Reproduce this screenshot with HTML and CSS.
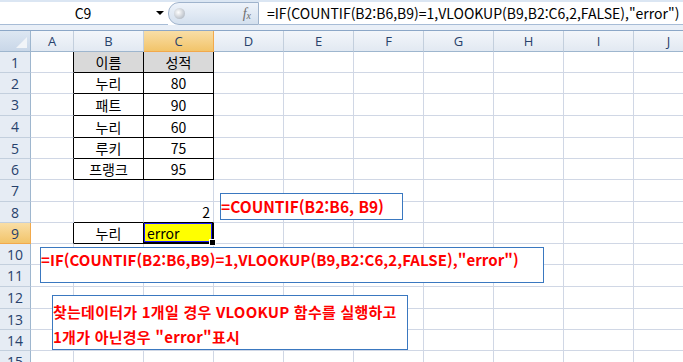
FILE: index.html
```html
<!DOCTYPE html>
<html lang="ko">
<head>
    <meta charset="UTF-8">
    <meta name="viewport" content="width=device-width, initial-scale=1.0">
    <title>COUNTIF VLOOKUP</title>
    <link rel="stylesheet" href="styles.css">
</head>
<body>
    <div class="app">
        <div class="formula-bar">
            <div class="name-box">
                <span class="name-box__text">C9</span>
                <span class="name-box__arrow"></span>
            </div>
            <div class="fx-pill">
                <span class="fx-pill__knob"></span>
                <span class="fx-pill__label">f<sub>x</sub></span>
            </div>
            <div class="formula-input">=IF(COUNTIF(B2:B6,B9)=1,VLOOKUP(B9,B2:C6,2,FALSE),"error")</div>
        </div>

        <div class="sheet">
            <!-- header -->
            <div class="hd corner"></div>
            <div class="hd col">A</div>
            <div class="hd col">B</div>
            <div class="hd col is-active">C</div>
            <div class="hd col">D</div>
            <div class="hd col">E</div>
            <div class="hd col">F</div>
            <div class="hd col">G</div>
            <div class="hd col">H</div>
            <div class="hd col">I</div>
            <div class="hd col">J</div>

            <!-- 1 -->
            <div class="hd row">1</div>
            <div class="c edge"></div>
            <div class="c box head">이름</div>
            <div class="c box head">성적</div>
            <div class="c"></div><div class="c"></div><div class="c"></div><div class="c"></div><div class="c"></div><div class="c"></div><div class="c"></div>

            <!-- 2 -->
            <div class="hd row">2</div>
            <div class="c edge"></div>
            <div class="c box">누리</div>
            <div class="c box">80</div>
            <div class="c"></div><div class="c"></div><div class="c"></div><div class="c"></div><div class="c"></div><div class="c"></div><div class="c"></div>

            <!-- 3 -->
            <div class="hd row">3</div>
            <div class="c edge"></div>
            <div class="c box">패트</div>
            <div class="c box">90</div>
            <div class="c"></div><div class="c"></div><div class="c"></div><div class="c"></div><div class="c"></div><div class="c"></div><div class="c"></div>

            <!-- 4 -->
            <div class="hd row">4</div>
            <div class="c edge"></div>
            <div class="c box">누리</div>
            <div class="c box">60</div>
            <div class="c"></div><div class="c"></div><div class="c"></div><div class="c"></div><div class="c"></div><div class="c"></div><div class="c"></div>

            <!-- 5 -->
            <div class="hd row">5</div>
            <div class="c edge"></div>
            <div class="c box">루키</div>
            <div class="c box">75</div>
            <div class="c"></div><div class="c"></div><div class="c"></div><div class="c"></div><div class="c"></div><div class="c"></div><div class="c"></div>

            <!-- 6 -->
            <div class="hd row">6</div>
            <div class="c edge"></div>
            <div class="c box">프랭크</div>
            <div class="c box">95</div>
            <div class="c"></div><div class="c"></div><div class="c"></div><div class="c"></div><div class="c"></div><div class="c"></div><div class="c"></div>

            <!-- 7 -->
            <div class="hd row">7</div>
            <div class="c"></div><div class="c"></div><div class="c"></div><div class="c"></div><div class="c"></div><div class="c"></div><div class="c"></div><div class="c"></div><div class="c"></div><div class="c"></div>

            <!-- 8 -->
            <div class="hd row">8</div>
            <div class="c"></div>
            <div class="c above"></div>
            <div class="c num above">2</div>
            <div class="c"></div><div class="c"></div><div class="c"></div><div class="c"></div><div class="c"></div><div class="c"></div><div class="c"></div>

            <!-- 9 -->
            <div class="hd row is-active">9</div>
            <div class="c edge"></div>
            <div class="c box">누리</div>
            <div class="c selected">error</div>
            <div class="c"></div><div class="c"></div><div class="c"></div><div class="c"></div><div class="c"></div><div class="c"></div><div class="c"></div>

            <!-- 10 - 15 -->
            <div class="hd row">10</div>
            <div class="c"></div><div class="c"></div><div class="c"></div><div class="c"></div><div class="c"></div><div class="c"></div><div class="c"></div><div class="c"></div><div class="c"></div><div class="c"></div>
            <div class="hd row">11</div>
            <div class="c"></div><div class="c"></div><div class="c"></div><div class="c"></div><div class="c"></div><div class="c"></div><div class="c"></div><div class="c"></div><div class="c"></div><div class="c"></div>
            <div class="hd row">12</div>
            <div class="c"></div><div class="c"></div><div class="c"></div><div class="c"></div><div class="c"></div><div class="c"></div><div class="c"></div><div class="c"></div><div class="c"></div><div class="c"></div>
            <div class="hd row">13</div>
            <div class="c"></div><div class="c"></div><div class="c"></div><div class="c"></div><div class="c"></div><div class="c"></div><div class="c"></div><div class="c"></div><div class="c"></div><div class="c"></div>
            <div class="hd row">14</div>
            <div class="c"></div><div class="c"></div><div class="c"></div><div class="c"></div><div class="c"></div><div class="c"></div><div class="c"></div><div class="c"></div><div class="c"></div><div class="c"></div>
            <div class="hd row">15</div>
            <div class="c"></div><div class="c"></div><div class="c"></div><div class="c"></div><div class="c"></div><div class="c"></div><div class="c"></div><div class="c"></div><div class="c"></div><div class="c"></div>
        </div>

        <!-- floating text boxes -->
        <div class="shape shape--countif">=COUNTIF(B2:B6, B9)</div>
        <div class="shape shape--if">=IF(COUNTIF(B2:B6,B9)=1,VLOOKUP(B9,B2:C6,2,FALSE),"error")</div>
        <div class="shape shape--note">
            <p>찾는데이터가 1개일 경우 VLOOKUP 함수를 실행하고</p>
            <p>1개가 아닌경우 "error"표시</p>
        </div>
    </div>
</body>
</html>
```

FILE: styles.css
```css
* { box-sizing: border-box; }

body {
  margin: 0;
  background: #fff;
  font-family: "Noto Sans CJK KR", "Noto Sans", sans-serif;
  color: #000;
}

.app {
  position: relative;
  width: 683px;
  height: 362px;
  overflow: hidden;
}

/* ==================== formula bar ==================== */

.formula-bar {
  display: flex;
  align-items: stretch;
  height: 30px;
  border-top: 2px solid #dbe6f3;
  border-bottom: 5px solid #e9eff7;
  background: #fff;
}

.name-box {
  display: flex;
  align-items: center;
  width: 168px;
  border-bottom: 1px solid #a7bcd6;
}

.name-box__text {
  flex: 1;
  text-align: center;
  font-size: 14px;
  padding-left: 10px;
}

.name-box__arrow {
  width: 0;
  height: 0;
  margin-right: 4px;
  border-left: 4px solid transparent;
  border-right: 4px solid transparent;
  border-top: 4px solid #000;
}

.fx-pill {
  position: relative;
  display: flex;
  align-items: center;
  justify-content: flex-end;
  width: 91px;
  padding-right: 7px;
  border: 1px solid #9fb3cc;
  border-radius: 11px 0 0 11px;
  background: linear-gradient(#eef3fa, #d4e0ee);
}

.fx-pill__knob {
  position: absolute;
  left: 5px;
  top: 5px;
  width: 11px;
  height: 11px;
  border-radius: 50%;
  background: radial-gradient(circle at 40% 40%, #fff, #9fa8b4);
}

.fx-pill__label {
  font-family: "Liberation Serif", serif;
  font-style: italic;
  font-size: 14px;
  color: #6d6d6d;
}

.fx-pill__label sub {
  font-size: 10px;
  vertical-align: -1px;
}

.formula-input {
  flex: 1;
  padding-left: 8px;
  line-height: 22px;
  font-size: 14px;
  white-space: nowrap;
  border-bottom: 1px solid #a7bcd6;
}

/* ==================== grid ==================== */

.sheet {
  display: grid;
  grid-template-columns: 31px 43px repeat(9, 70px);
  grid-template-rows: 21px 21px 21px 22px 22px 21px 21px 22px 21px 21px 21px 22px 22px 21px 21px 22px;
  border-top: 1px solid #8ca7c7;
}

.c {
  border-right: 1px solid #d0d7e5;
  border-bottom: 1px solid #d0d7e5;
  display: flex;
  align-items: center;
  justify-content: center;
  font-size: 14px;
  white-space: nowrap;
}

.hd {
  display: flex;
  align-items: center;
  justify-content: center;
  border-right: 1px solid #c3cfdd;
  border-bottom: 1px solid #c3cfdd;
  background: linear-gradient(#f3f6fa, #e2e9f2);
  color: #27416b;
  font-family: "Open Sans", sans-serif;
  font-size: 13px;
}

.hd.row {
  background: #e6ecf4;
  border-right-color: #9eb6ce;
  font-size: 14px;
}

.hd.col {
  border-bottom-color: #9eb6ce;
}

.hd.is-active {
  background: linear-gradient(#f9dea6, #f2c46a);
  border-color: #f2a94b;
}

.corner {
  position: relative;
  background: linear-gradient(#dde7f2, #c9d7e8);
  border-right-color: #9eb6ce;
  border-bottom-color: #9eb6ce;
}

.corner::after {
  content: "";
  position: absolute;
  right: 3px;
  bottom: 3px;
  border-left: 11px solid transparent;
  border-bottom: 11px solid #f1f4f8;
}

/* data table */
.c.edge { border-right-color: #000; }
.c.above { border-bottom-color: #000; }
.c.box {
  border-right-color: #000;
  border-bottom-color: #000;
}
.c.head { background: #d9d9d9; }

.c.num {
  justify-content: flex-end;
  padding-right: 3px;
}

.c.selected {
  position: relative;
  justify-content: flex-start;
  padding-left: 3px;
  background: #ff0;
  border-right: 2px solid #000;
  border-bottom: 2px solid #000;
  box-shadow: inset 0 0 0 1px #1c1cff;
}

.c.selected::after {
  content: "";
  position: absolute;
  right: -4px;
  bottom: -4px;
  width: 5px;
  height: 5px;
  background: #000;
  border: 1px solid #fff;
}

/* ==================== text boxes ==================== */

.shape {
  position: absolute;
  border: 1px solid #3a78c0;
  background: #fff;
  color: #ff0000;
  font-weight: bold;
  white-space: nowrap;
}

.shape--countif {
  left: 220px;
  top: 193px;
  width: 183px;
  height: 27px;
  padding-top: 1px;
  font-size: 15.5px;
  line-height: 22px;
}

.shape--if {
  left: 40px;
  top: 247px;
  width: 504px;
  height: 36px;
  padding-top: 1px;
  font-size: 15px;
  letter-spacing: 0.07px;
  line-height: 22px;
}

.shape--note {
  left: 52px;
  top: 295px;
  width: 356px;
  height: 55px;
  padding-top: 3px;
  font-size: 15px;
  letter-spacing: 0.25px;
  line-height: 25px;
}

.shape--note p { margin: 0; }
```
